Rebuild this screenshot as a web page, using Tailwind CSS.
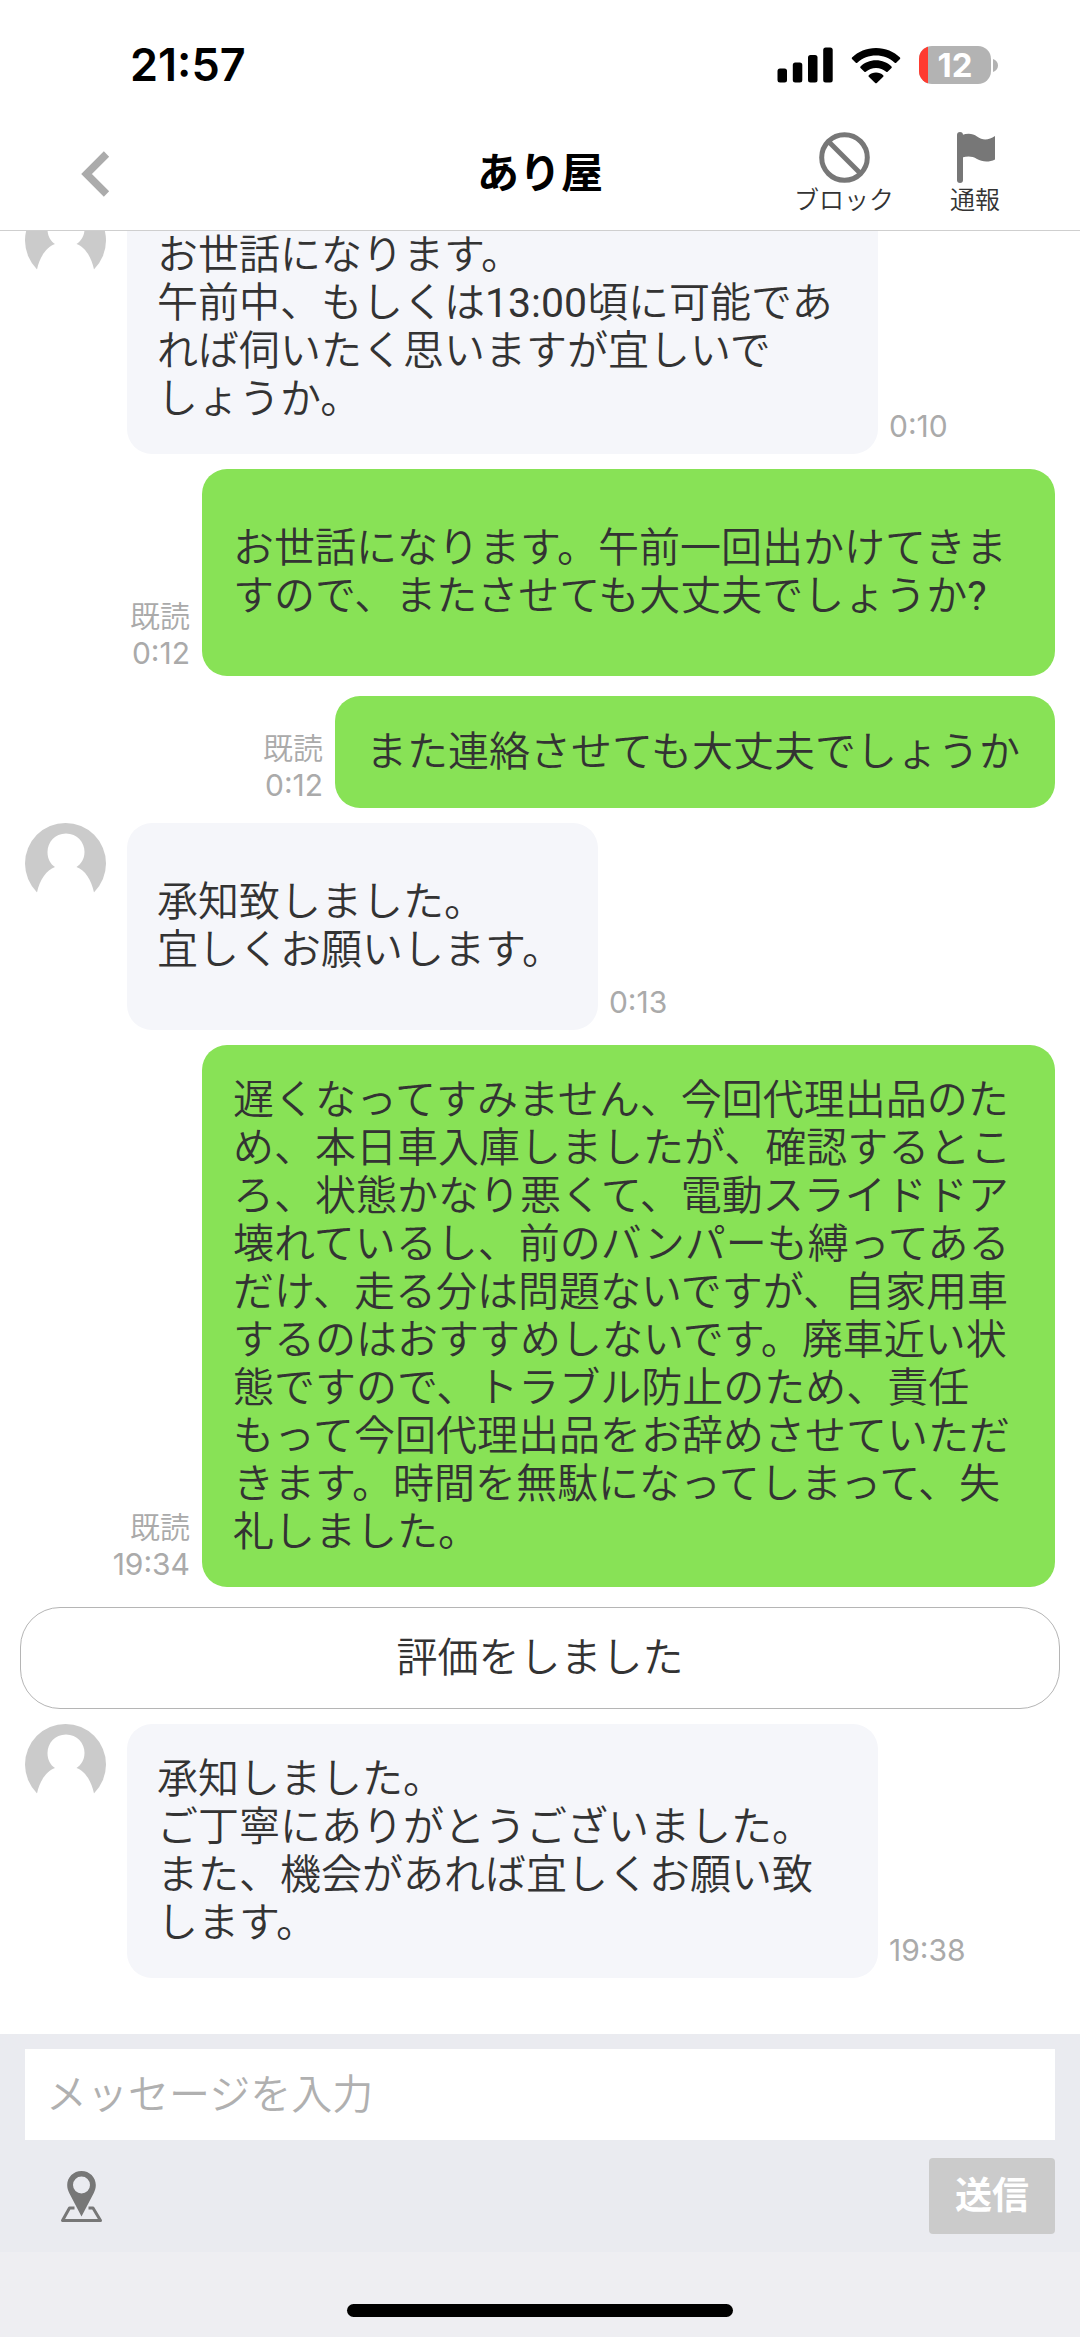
<!DOCTYPE html>
<html lang="ja">
<head>
<meta charset="utf-8">
<meta name="viewport" content="width=device-width, initial-scale=1">
<title>あり屋</title>
<script src="https://cdn.jsdelivr.net/npm/@tailwindcss/browser@4"></script>
</head>
<body class="bg-white">
<svg class="hidden" aria-hidden="true">
  <symbol id="avatar" viewBox="0 0 81 70">
    <circle cx="40.500" cy="40.500" r="40.500" fill="#cbcbcb"/>
    <path fill="#fff" d="M41 10.500C52 10.500 59.500 19 59.500 29C59.500 36 56 41 51.500 44C60 47 66.500 57 69 69.500V82H12V69.500C14.500 57 21.500 47 30 44C25.500 41 22.500 36 22.500 29C22.500 19 30 10.500 41 10.500Z"/>
  </symbol>
</svg>
<div class="flex h-screen flex-col overflow-hidden font-['Roboto','Noto_Sans_CJK_JP',sans-serif] text-[41px] leading-[48px] font-[350] text-[#333]">

  <header class="shrink-0 border-b border-[#cfcfcf] bg-white">
    <!-- Status bar -->
    <div class="flex h-[116px] items-center justify-between pt-[14px] pr-[82px] pl-[130px] text-black">
      <span class="font-['Inter',sans-serif] text-[45px] font-semibold">21:57</span>
      <div class="flex items-center">
        <svg class="mr-[18px] h-[36px] w-[56px]" viewBox="0 0 56 36" aria-hidden="true">
          <rect x="0.500" y="21.500" width="9.500" height="14" rx="2.500"/>
          <rect x="15.800" y="15.500" width="9.500" height="20" rx="2.500"/>
          <rect x="31" y="8" width="9.500" height="27.500" rx="2.500"/>
          <rect x="46.200" y="0.500" width="9.500" height="35" rx="2.500"/>
        </svg>
        <svg class="mr-[18px] h-[37px] w-[50px]" viewBox="0 0 50 37" aria-hidden="true">
          <path d="M25 1C34.500 1 43 4.800 49 10.500Q49.600 11.200 49 12L45.200 15.800Q44.500 16.400 43.700 15.800C38.500 11 32 8.600 25 8.600S11.500 11 6.300 15.800Q5.500 16.400 4.800 15.800L1 12Q.4 11.200 1 10.500C7 4.800 15.500 1 25 1Z"/>
          <path d="M25 13.300C31 13.300 36.500 15.600 40.500 19.400Q41.200 20.100 40.500 20.900L36.600 24.700Q35.900 25.300 35.200 24.700C32.300 22.200 28.900 20.900 25 20.900S17.700 22.200 14.800 24.700Q14.100 25.300 13.400 24.700L9.500 20.900Q8.800 20.100 9.500 19.400C13.500 15.600 19 13.300 25 13.300Z"/>
          <path d="M25 25.600C27.900 25.600 30.300 26.600 32.200 28.200Q32.900 28.900 32.200 29.700L25.800 36Q25 36.700 24.200 36L17.800 29.700Q17.100 28.900 17.800 28.200C19.700 26.600 22.100 25.600 25 25.600Z"/>
        </svg>
        <div class="relative flex h-[38px] w-[72px] items-center justify-center overflow-hidden rounded-[13px] bg-[#b3b3b3]">
          <span class="absolute inset-y-0 left-0 w-[9px] bg-[#ff3b30]"></span>
          <span class="font-['Inter',sans-serif] text-[33px] font-bold text-white">12</span>
        </div>
        <svg class="ml-[2px] h-[13px] w-[5px]" viewBox="0 0 5 13" aria-hidden="true"><path fill="#b3b3b3" d="M0 0C3 1 5 3.500 5 6.500S3 12 0 13Z"/></svg>
      </div>
    </div>
    <!-- Navigation -->
    <nav class="grid h-[114px] grid-cols-[1fr_auto_1fr] items-center pt-[2px] pr-[80px] pl-[80px]">
      <button type="button" aria-label="戻る" class="w-[30px]">
        <svg class="h-[46px] w-[30px]" viewBox="0 0 30 46" aria-hidden="true"><path fill="none" stroke="#ababab" stroke-width="7.500" d="M26.500 3L6.500 23L26.500 43"/></svg>
      </button>
      <h1 class="text-[42px] font-bold text-black">あり屋</h1>
      <div class="flex justify-end gap-[56px] text-[25px] leading-[30px]">
        <button type="button" class="flex w-[100px] flex-col items-center gap-[3px]">
          <svg class="h-[51px] w-[51px]" viewBox="0 0 51 51" fill="none" stroke="#777" stroke-width="5" aria-hidden="true"><circle cx="25.500" cy="25.500" r="22.800"/><path d="M9.500 9.500L41.500 41.500"/></svg>
          <span>ブロック</span>
        </button>
        <button type="button" class="flex w-[50px] flex-col items-center gap-[3px]">
          <svg class="h-[51px] w-[40px]" viewBox="0 0 40 51" fill="#777" aria-hidden="true"><rect x="2" y="0" width="6" height="51" rx="3"/><path d="M7 3C13 1 18 1.500 22 4.500C28 9 34 8 40 4V27.500C34 30.500 27 30 22 27C17 24 13 24 7 25.500Z"/></svg>
          <span>通報</span>
        </button>
      </div>
    </nav>
  </header>

  <!-- Message list: a reversed column keeps the newest message in view -->
  <main class="flex min-h-0 flex-1 flex-col-reverse overflow-y-auto [scrollbar-width:none]">
    <div class="flex shrink-0 flex-col pb-[56px]">

      <article class="flex items-start pr-[25px] pl-[25px]">
        <svg class="mr-[21px] h-[70px] w-[81px] shrink-0" role="img" aria-label="あり屋"><use href="#avatar"/></svg>
        <p class="w-full max-w-[751px] rounded-[25px] bg-[#f5f6fa] px-[30px] py-[31px]">お世話になります。<br>午前中、もしくは<span class="font-normal">13:00</span>頃に可能であ<br>れば伺いたく思いますが宜しいで<br>しょうか。</p>
        <time class="ml-[11px] self-end pb-[10px] font-['Inter',sans-serif] text-[30px] leading-[36px] font-normal text-[#aaa]">0:10</time>
      </article>

      <article class="mt-[15px] flex items-end justify-end pr-[25px] pl-[25px]">
        <div class="mr-[12px] pb-[5px] text-right text-[30px] leading-[36px] text-[#aaa]"><p>既読</p><time class="block font-['Inter',sans-serif] font-normal">0:12</time></div>
        <div class="flex min-h-[207px] w-full max-w-[853px] items-center rounded-[25px] bg-[#88e256] px-[31px] pb-[2px]"><p>お世話になります。午前一回出かけてきま<br>すので、またさせても大丈夫でしょうか<span class="font-normal">?</span></p></div>
      </article>

      <article class="mt-[20px] flex items-end justify-end pr-[25px] pl-[25px]">
        <div class="mr-[12px] pb-[5px] text-right text-[30px] leading-[36px] text-[#aaa]"><p>既読</p><time class="block font-['Inter',sans-serif] font-normal">0:12</time></div>
        <p class="rounded-[25px] bg-[#88e256] pr-[35px] pl-[31px] py-[32px]">また連絡させても大丈夫でしょうか</p>
      </article>

      <article class="mt-[15px] flex items-start pr-[25px] pl-[25px]">
        <svg class="mr-[21px] h-[70px] w-[81px] shrink-0" role="img" aria-label="あり屋"><use href="#avatar"/></svg>
        <div class="flex min-h-[207px] items-center rounded-[25px] bg-[#f5f6fa] pr-[35px] pl-[30px] pb-[2px]"><p>承知致しました。<br>宜しくお願いします。</p></div>
        <time class="ml-[11px] self-end pb-[10px] font-['Inter',sans-serif] text-[30px] leading-[36px] font-normal text-[#aaa]">0:13</time>
      </article>

      <article class="mt-[15px] flex items-end justify-end pr-[25px] pl-[25px]">
        <div class="mr-[12px] pb-[5px] text-right text-[30px] leading-[36px] text-[#aaa]"><p>既読</p><time class="block font-['Inter',sans-serif] font-normal">19:34</time></div>
        <p class="w-full max-w-[853px] rounded-[25px] bg-[#88e256] px-[31px] py-[31px]">遅くなってすみません、今回代理出品のた<br>め、本日車入庫しましたが、確認するとこ<br>ろ、状態かなり悪くて、電動スライドドア<br>壊れているし、前のバンパーも縛ってある<br>だけ、走る分は問題ないですが、自家用車<br>するのはおすすめしないです。廃車近い状<br>態ですので、トラブル防止のため、責任<br>もって今回代理出品をお辞めさせていただ<br>きます。時間を無駄になってしまって、失<br>礼しました。</p>
      </article>

      <p class="mx-[20px] mt-[20px] rounded-[40px] border border-[#b5b5b5] py-[26px] text-center">評価をしました</p>

      <article class="mt-[15px] flex items-start pr-[25px] pl-[25px]">
        <svg class="mr-[21px] h-[70px] w-[81px] shrink-0" role="img" aria-label="あり屋"><use href="#avatar"/></svg>
        <p class="w-full max-w-[751px] rounded-[25px] bg-[#f5f6fa] px-[30px] py-[31px]">承知しました。<br>ご丁寧にありがとうございました。<br>また、機会があれば宜しくお願い致<br>します。</p>
        <time class="ml-[11px] self-end pb-[10px] font-['Inter',sans-serif] text-[30px] leading-[36px] font-normal text-[#aaa]">19:38</time>
      </article>
    </div>
  </main>

  <footer class="shrink-0 bg-[#eeeef2]">
    <form class="flex flex-col gap-[18px] bg-[#eaebf0] px-[25px] pt-[15px] pb-[18px]">
      <input type="text" aria-label="メッセージ" placeholder="メッセージを入力" class="h-[91px] w-full bg-white px-[21px] placeholder:text-[#b0b0b0] focus:outline-none">
      <div class="flex items-center justify-between pl-[35px]">
        <button type="button" aria-label="位置情報">
          <svg class="h-[53px] w-[43px]" viewBox="0 0 43 53" aria-hidden="true">
            <path fill="none" stroke="#777" stroke-width="3" stroke-linejoin="round" d="M14.500 38H9.500L2.500 50.500H40.500L33 38H28.500"/>
            <path fill="#777" fill-rule="evenodd" d="M21.500 1C29.500 1 35.800 7.300 35.800 15C35.800 18 35 20.500 33.800 23L21.500 46.500L9.200 23C8 20.500 7.200 18 7.200 15C7.200 7.300 13.500 1 21.500 1ZM21.500 6.500A8.500 8.500 0 1 0 21.500 23.500A8.500 8.500 0 1 0 21.500 6.500Z"/>
          </svg>
        </button>
        <button type="submit" class="h-[76px] w-[126px] rounded-[4px] bg-[#cbcbcb] pt-[2px] text-[37px] font-bold text-white">送信</button>
      </div>
    </form>
    <div class="flex justify-center pt-[52px] pb-[20px]"><span class="h-[13px] w-[386px] rounded-full bg-black"></span></div>
  </footer>
</div>
</body>
</html>
